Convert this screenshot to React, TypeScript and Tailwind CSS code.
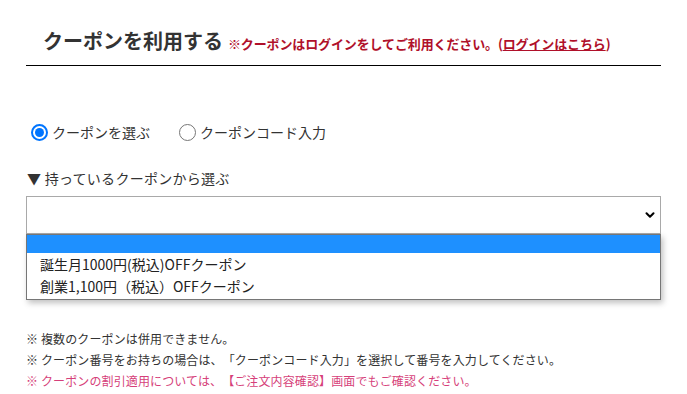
import { ChevronDown } from 'lucide-react';

const font = { fontFamily: '"Noto Sans CJK JP", "Noto Sans", sans-serif' };

function Radio({ checked, label }: { checked: boolean; label: string }) {
  return (
    <label className="flex items-center gap-[4px] text-[14px] leading-[20px] text-[#333]">
      {checked ? (
        <span className="w-[17px] h-[17px] rounded-full border-[2px] border-[#0075ff] flex items-center justify-center">
          <span className="w-[9px] h-[9px] rounded-full bg-[#0075ff]" />
        </span>
      ) : (
        <span className="w-[17px] h-[17px] rounded-full border border-[#767676] bg-white" />
      )}
      <span>{label}</span>
    </label>
  );
}

export default function App() {
  const options = ['誕生月1000円(税込)OFFクーポン', '創業1,100円（税込）OFFクーポン'];

  return (
    <div
      className="w-[687px] h-[394px] bg-white px-[26px] overflow-hidden [text-spacing-trim:space-all]"
      style={font}
    >
      {/* Header */}
      <div className="pt-[26px] pb-[9px] pl-[17px] border-b border-black flex items-baseline gap-[5px]">
        <h2 className="text-[20px] leading-[30px] font-bold text-[#333]">クーポンを利用する</h2>
        <p className="text-[13px] font-bold text-[#b0102a] tracking-[-0.01em]">
          ※クーポンはログインをしてご利用ください。(
          <span className="underline">ログインはこちら</span>)
        </p>
      </div>

      {/* Radios */}
      <div className="mt-[56px] pl-[5px] flex items-center gap-[29px]">
        <Radio checked label="クーポンを選ぶ" />
        <Radio checked={false} label="クーポンコード入力" />
      </div>

      <p className="mt-[26px] pl-[1px] text-[14px] leading-[20px] text-[#333] tracking-[0.02em]">
        ▼ 持っているクーポンから選ぶ
      </p>

      {/* Select with open list */}
      <div className="relative mt-[8px]">
        <div className="h-[38px] border border-[#a9a9a9] bg-white flex items-center justify-end pr-[3px]">
          <ChevronDown className="w-[14px] h-[14px] text-black" strokeWidth={3.5} />
        </div>
        <div className="absolute top-full left-0 right-0 border border-[#767676] bg-white shadow-[2px_3px_6px_rgba(0,0,0,0.25)] pb-[2px]">
          <div className="h-[18px] bg-[#1e90ff]" />
          {options.map((o) => (
            <div key={o} className="h-[22px] pl-[13px] flex items-center text-[14px] text-[#222]">
              {o}
            </div>
          ))}
        </div>
      </div>

      {/* Notes */}
      <div className="mt-[94px] text-[12px] leading-[21px] text-[#333] tracking-[0.01em]">
        <p>※ 複数のクーポンは併用できません。</p>
        <p>※ クーポン番号をお持ちの場合は、「クーポンコード入力」を選択して番号を入力してください。</p>
        <p className="text-[#d63f7a]">※ クーポンの割引適用については、【ご注文内容確認】画面でもご確認ください。</p>
      </div>
    </div>
  );
}
